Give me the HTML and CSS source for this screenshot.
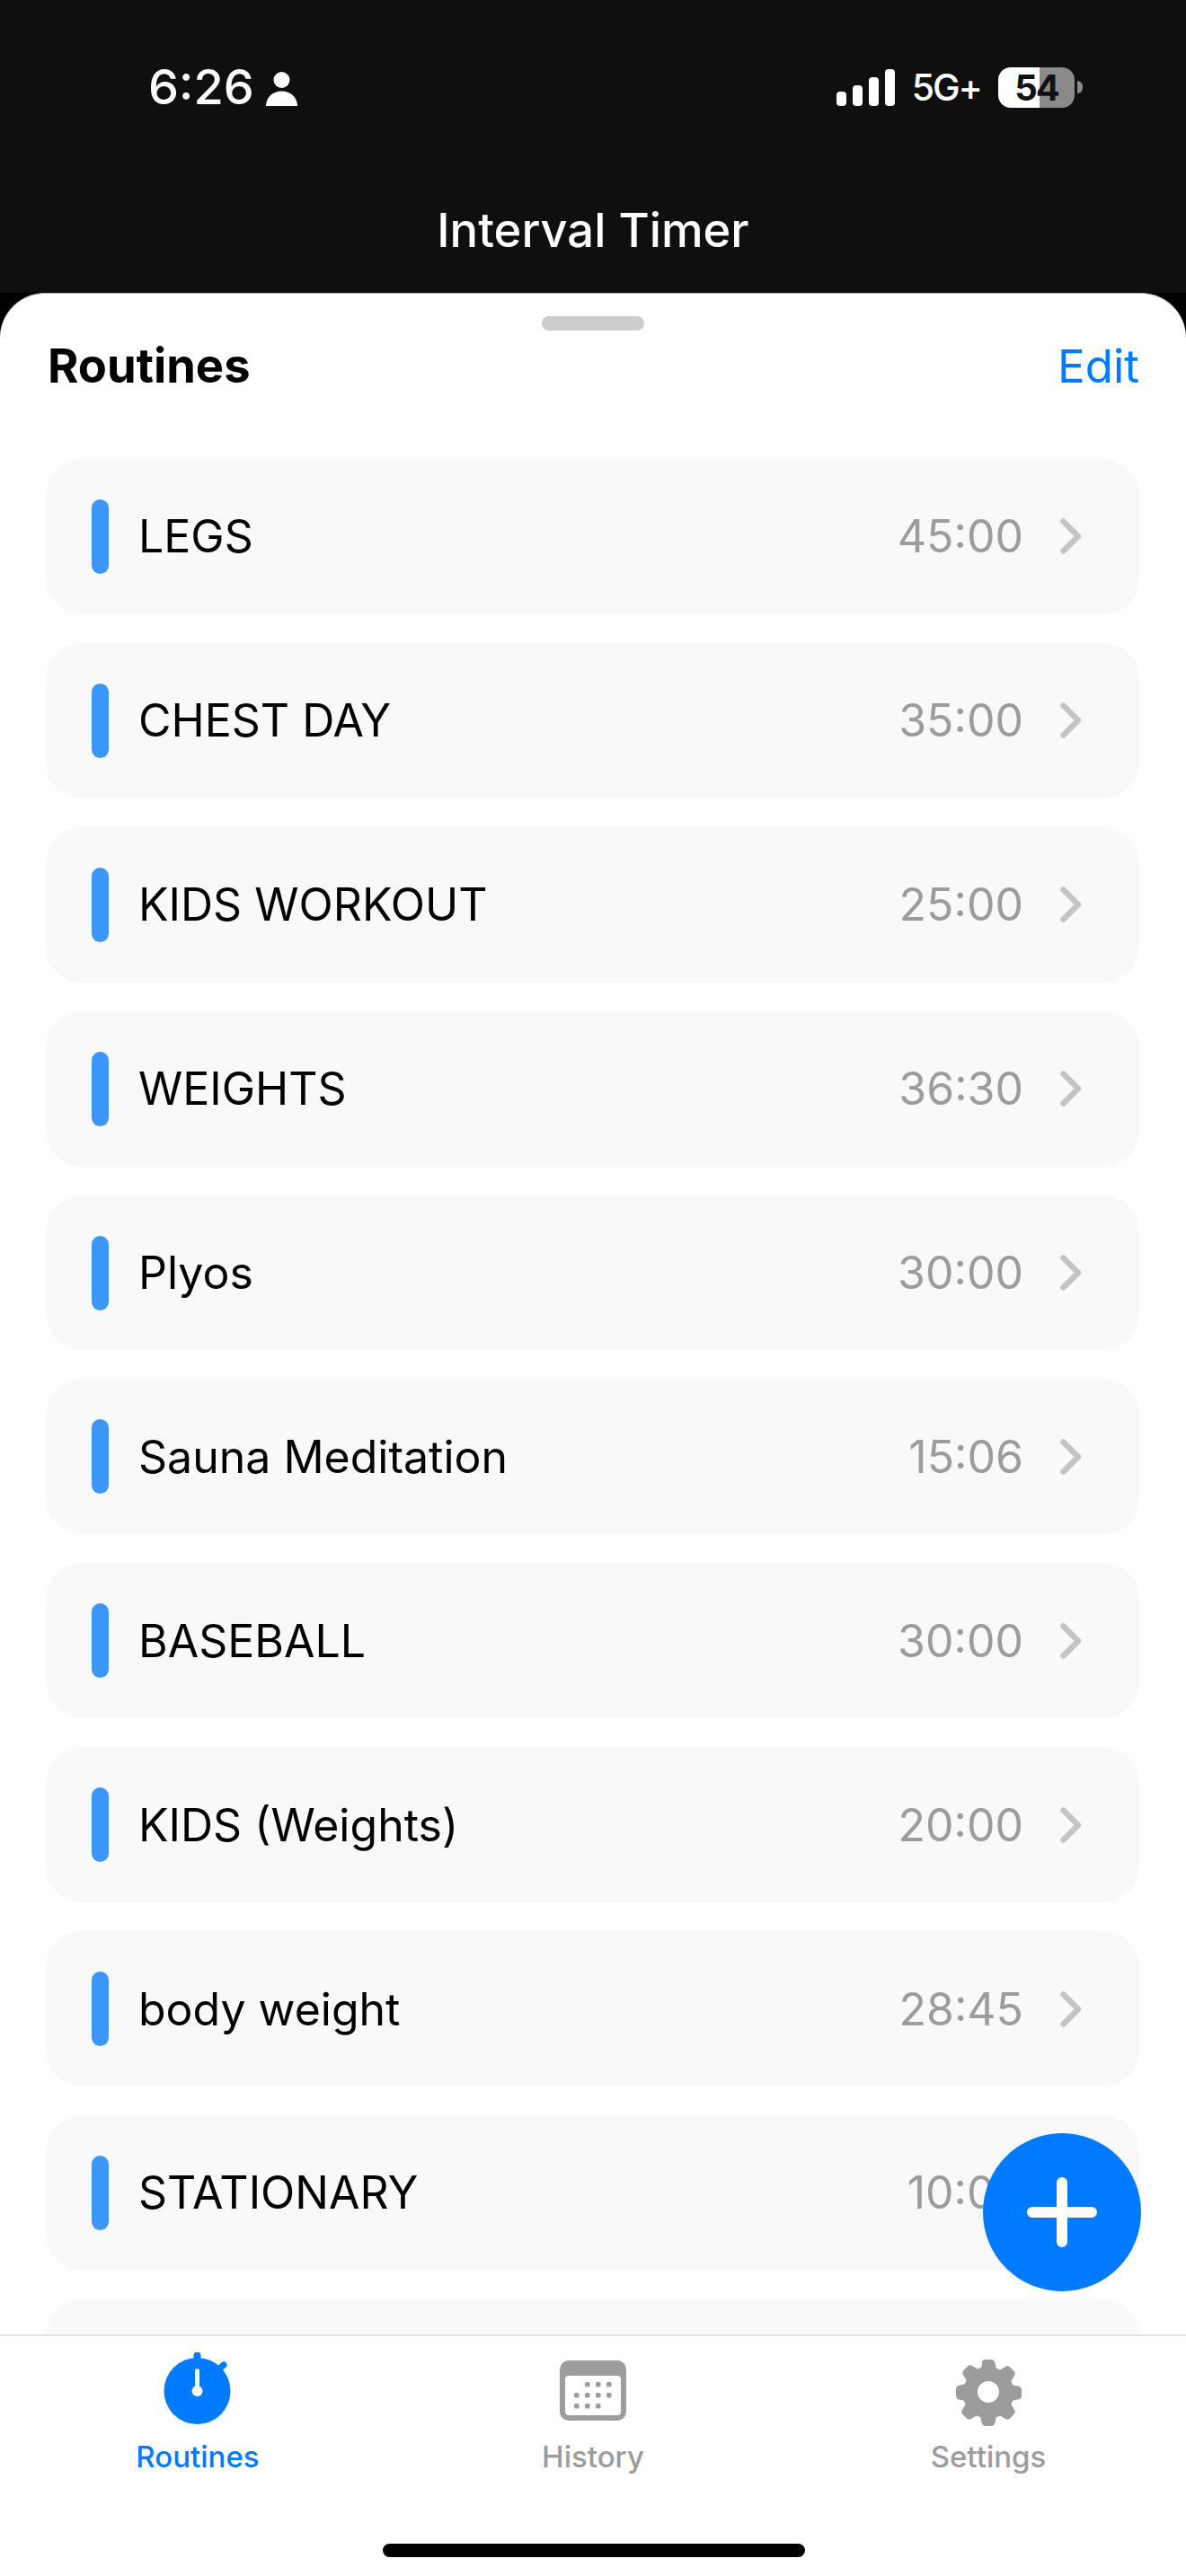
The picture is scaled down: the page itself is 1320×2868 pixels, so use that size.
FILE: index.html
```html
<!DOCTYPE html>
<html lang="en">
<head>
    <meta charset="UTF-8">
    <meta name="viewport" content="width=device-width, initial-scale=1.0">
    <title>Interval Timer</title>
    <link rel="stylesheet" href="styles.css">
</head>
<body>
    <div class="phone">
        <header class="topbar">
            <div class="status">
                <div class="status-left">
                    <span class="clock">6:26</span>
                    <svg class="person" viewBox="0 0 35 38"><circle cx="17.500" cy="9" r="9" fill="#fff"/><path d="M0 38c0-10 8-16.500 17.500-16.500S35 28 35 38z" fill="#fff"/></svg>
                </div>
                <div class="status-right">
                    <div class="signal">
                        <span class="sig sig1"></span>
                        <span class="sig sig2"></span>
                        <span class="sig sig3"></span>
                        <span class="sig sig4"></span>
                    </div>
                    <span class="network">5G+</span>
                    <div class="battery">
                        <div class="battery-body"><span>54</span></div>
                        <span class="battery-cap"></span>
                    </div>
                </div>
            </div>
            <div class="app-title">Interval Timer</div>
        </header>

        <main class="sheet">
            <div class="handle"></div>
            <div class="sheet-head">
                <h1>Routines</h1>
                <span class="edit">Edit</span>
            </div>
            <div class="routines">
                <div class="routine"><span class="bar"></span><span class="name">LEGS</span><span class="time">45:00</span><svg class="chev" viewBox="0 0 24 40"><path d="M3.500 3.500 20 20 3.500 36.500" /></svg></div>
                <div class="routine"><span class="bar"></span><span class="name">CHEST DAY</span><span class="time">35:00</span><svg class="chev" viewBox="0 0 24 40"><path d="M3.500 3.500 20 20 3.500 36.500" /></svg></div>
                <div class="routine"><span class="bar"></span><span class="name">KIDS WORKOUT</span><span class="time">25:00</span><svg class="chev" viewBox="0 0 24 40"><path d="M3.500 3.500 20 20 3.500 36.500" /></svg></div>
                <div class="routine"><span class="bar"></span><span class="name">WEIGHTS</span><span class="time">36:30</span><svg class="chev" viewBox="0 0 24 40"><path d="M3.500 3.500 20 20 3.500 36.500" /></svg></div>
                <div class="routine"><span class="bar"></span><span class="name">Plyos</span><span class="time">30:00</span><svg class="chev" viewBox="0 0 24 40"><path d="M3.500 3.500 20 20 3.500 36.500" /></svg></div>
                <div class="routine"><span class="bar"></span><span class="name">Sauna Meditation</span><span class="time">15:06</span><svg class="chev" viewBox="0 0 24 40"><path d="M3.500 3.500 20 20 3.500 36.500" /></svg></div>
                <div class="routine"><span class="bar"></span><span class="name">BASEBALL</span><span class="time">30:00</span><svg class="chev" viewBox="0 0 24 40"><path d="M3.500 3.500 20 20 3.500 36.500" /></svg></div>
                <div class="routine"><span class="bar"></span><span class="name">KIDS (Weights)</span><span class="time">20:00</span><svg class="chev" viewBox="0 0 24 40"><path d="M3.500 3.500 20 20 3.500 36.500" /></svg></div>
                <div class="routine"><span class="bar"></span><span class="name">body weight</span><span class="time">28:45</span><svg class="chev" viewBox="0 0 24 40"><path d="M3.500 3.500 20 20 3.500 36.500" /></svg></div>
                <div class="routine"><span class="bar"></span><span class="name">STATIONARY</span><span class="time">10:00</span><svg class="chev" viewBox="0 0 24 40"><path d="M3.500 3.500 20 20 3.500 36.500" /></svg></div>
                <div class="routine"></div>
            </div>
            <button class="fab" type="button"><svg viewBox="0 0 78 78"><path d="M39 6v66M6 39h66" /></svg></button>
        </main>

        <nav class="tabs">
            <div class="tab tab-on">
                <svg class="tab-icon" viewBox="0 0 80 84"><path d="M39.500 3.500v10" stroke="#007aff" stroke-width="8" stroke-linecap="round"/><path d="M62 20l7-6" stroke="#007aff" stroke-width="7" stroke-linecap="round"/><circle cx="39.500" cy="43" r="37" fill="#007aff"/><path d="M39.500 20.500v20" stroke="#fff" stroke-width="5" stroke-linecap="round"/><circle cx="39.500" cy="43" r="6" fill="#fff"/></svg>
                <span>Routines</span>
            </div>
            <div class="tab">
                <svg class="tab-icon" viewBox="0 0 80 84"><rect x="3" y="9" width="74" height="67" rx="10" fill="#9c9c9c"/><rect x="9" y="26" width="62" height="44" rx="4" fill="#fff"/><g fill="#9c9c9c"><rect x="31" y="33" width="5.500" height="5.500" rx="1.500"/><rect x="43" y="33" width="5.500" height="5.500" rx="1.500"/><rect x="55" y="33" width="5.500" height="5.500" rx="1.500"/><rect x="19" y="45" width="5.500" height="5.500" rx="1.500"/><rect x="31" y="45" width="5.500" height="5.500" rx="1.500"/><rect x="43" y="45" width="5.500" height="5.500" rx="1.500"/><rect x="55" y="45" width="5.500" height="5.500" rx="1.500"/><rect x="19" y="57" width="5.500" height="5.500" rx="1.500"/><rect x="31" y="57" width="5.500" height="5.500" rx="1.500"/><rect x="43" y="57" width="5.500" height="5.500" rx="1.500"/></g></svg>
                <span>History</span>
            </div>
            <div class="tab">
                <svg class="tab-icon" viewBox="0 0 80 84"><path transform="translate(0 4)" fill="#9c9c9c" fill-rule="evenodd" d="M33 6.500c.5-1.500 2-2.500 3.500-2.500h7c1.500 0 3 1 3.500 2.500l1.800 7.300 4.300 1.800 6.400-3.900c1.400-.8 3.100-.6 4.300.5l5 5c1.100 1.200 1.300 2.900.5 4.300l-3.900 6.400 1.800 4.300 7.300 1.800c1.500.5 2.500 2 2.500 3.500v7c0 1.500-1 3-2.500 3.500l-7.300 1.800-1.800 4.300 3.900 6.400c.8 1.400.6 3.100-.5 4.300l-5 5c-1.200 1.100-2.900 1.300-4.300.5l-6.400-3.900-4.300 1.800-1.800 7.300c-.5 1.500-2 2.500-3.500 2.500h-7c-1.500 0-3-1-3.500-2.500l-1.800-7.300-4.300-1.800-6.400 3.900c-1.400.8-3.100.6-4.300-.5l-5-5c-1.100-1.200-1.300-2.900-.5-4.300l3.900-6.400-1.800-4.300-7.300-1.800C5 46.500 4 45 4 43.500v-7c0-1.500 1-3 2.500-3.500l7.300-1.800 1.800-4.300-3.900-6.400c-.8-1.400-.6-3.100.5-4.300l5-5c1.200-1.100 2.900-1.300 4.300-.5l6.400 3.900 4.300-1.800zM40 28a12 12 0 1 0 0 24 12 12 0 0 0 0-24z"/></svg>
                <span>Settings</span>
            </div>
            <div class="home-bar"></div>
        </nav>
    </div>
</body>
</html>
```

FILE: styles.css
```css
* {
    box-sizing: border-box;
}
html, body {
    margin: 0;
    padding: 0;
}
body {
    background-color: #000;
    font-family: Inter, "Noto Sans", sans-serif;
}
.phone {
    width: 1320px;
    height: 2868px;
    display: flex;
    flex-direction: column;
    overflow: hidden;
}

/* top area */
.topbar {
    height: 326px;
    flex: none;
    background-color: #0f0f0f;
    color: #fff;
}
.status {
    height: 220px;
    padding: 71px 115px 0 165px;
    display: flex;
    justify-content: space-between;
    align-items: flex-start;
}
.status-left {
    display: flex;
    align-items: center;
    gap: 13px;
    height: 52px;
}
.clock {
    font-size: 54px;
    font-weight: 500;
    line-height: 52px;
}
.person {
    width: 35px;
    height: 38px;
    margin-top: 3px;
}
.status-right {
    display: flex;
    align-items: center;
    gap: 19px;
    height: 52px;
}
.signal {
    display: flex;
    align-items: flex-end;
    gap: 7px;
    height: 41px;
}
.sig {
    width: 11px;
    background-color: #fff;
    border-radius: 4px;
}
.sig1 { height: 16px; }
.sig2 { height: 23px; }
.sig3 { height: 32px; }
.sig4 { height: 41px; }
.network {
    font-size: 41px;
    font-weight: 500;
    letter-spacing: -2px;
    line-height: 44px;
}
.battery {
    display: flex;
    align-items: center;
    gap: 3px;
}
.battery-body {
    width: 85px;
    height: 45px;
    border-radius: 14px;
    background: linear-gradient(90deg, #fff 54%, #8a8a8a 54%);
    color: #111;
    font-size: 40px;
    font-weight: 700;
    letter-spacing: -2px;
    line-height: 45px;
    text-align: center;
}
.battery-cap {
    width: 6px;
    height: 14px;
    border-radius: 0 7px 7px 0;
    background-color: #8a8a8a;
}
.app-title {
    text-align: center;
    font-size: 52.500px;
    font-weight: 500;
    line-height: 72px;
}

/* sheet */
.sheet {
    position: relative;
    flex: 1;
    min-height: 0;
    background-color: #fff;
    border-top: 1px solid #aaa;
    border-radius: 50px 50px 0 0;
    padding: 25px 52px 0 51px;
    overflow: hidden;
}
.handle {
    width: 114px;
    height: 16px;
    margin: 0 auto;
    border-radius: 8px;
    background-color: #ccc;
}
.sheet-head {
    display: flex;
    justify-content: space-between;
    align-items: center;
    height: 70px;
    margin-top: 4px;
    padding-left: 2px;
}
h1 {
    margin: 0;
    font-size: 52.500px;
    font-weight: 700;
}
.edit {
    font-size: 51px;
    color: #007aff;
}
.routines {
    display: flex;
    flex-direction: column;
    gap: 32px;
    margin-top: 69px;
}
.routine {
    flex: none;
    display: flex;
    align-items: center;
    height: 172.900px;
    padding: 0 64px 0 51px;
    background-color: #f9f9f9;
    border-radius: 40px;
}
.bar {
    width: 19px;
    height: 83px;
    border-radius: 10px;
    background-color: #3b96f8;
}
.name {
    margin-left: 33px;
    font-size: 50px;
    color: #000;
}
.time {
    margin-left: auto;
    margin-right: 41px;
    font-size: 50px;
    color: #9c9c9c;
}
.chev {
    width: 24px;
    height: 40px;
}
.chev path {
    fill: none;
    stroke: #c4c4c4;
    stroke-width: 6.500;
    stroke-linecap: round;
    stroke-linejoin: round;
}
.fab {
    position: absolute;
    left: 1094px;
    top: 2048px;
    width: 176px;
    height: 176px;
    padding: 49px;
    border: 0;
    border-radius: 50%;
    background-color: #007aff;
}
.fab svg {
    display: block;
    width: 78px;
    height: 78px;
}
.fab path {
    fill: none;
    stroke: #fff;
    stroke-width: 12;
    stroke-linecap: round;
}

/* tab bar */
.tabs {
    position: relative;
    flex: none;
    height: 269px;
    display: grid;
    grid-template-columns: 440px 440px 440px;
    border-top: 2px solid #e4e4e4;
    background-color: #fff;
}
.tab {
    display: flex;
    flex-direction: column;
    align-items: center;
    padding-top: 18px;
    font-size: 33px;
    font-weight: 500;
    color: #9c9c9c;
}
.tab-on {
    color: #007aff;
}
.tab-icon {
    width: 80px;
    height: 84px;
    margin-bottom: 12px;
}
.home-bar {
    position: absolute;
    left: 426px;
    bottom: 21px;
    width: 470px;
    height: 15px;
    border-radius: 8px;
    background-color: #000;
}
```
